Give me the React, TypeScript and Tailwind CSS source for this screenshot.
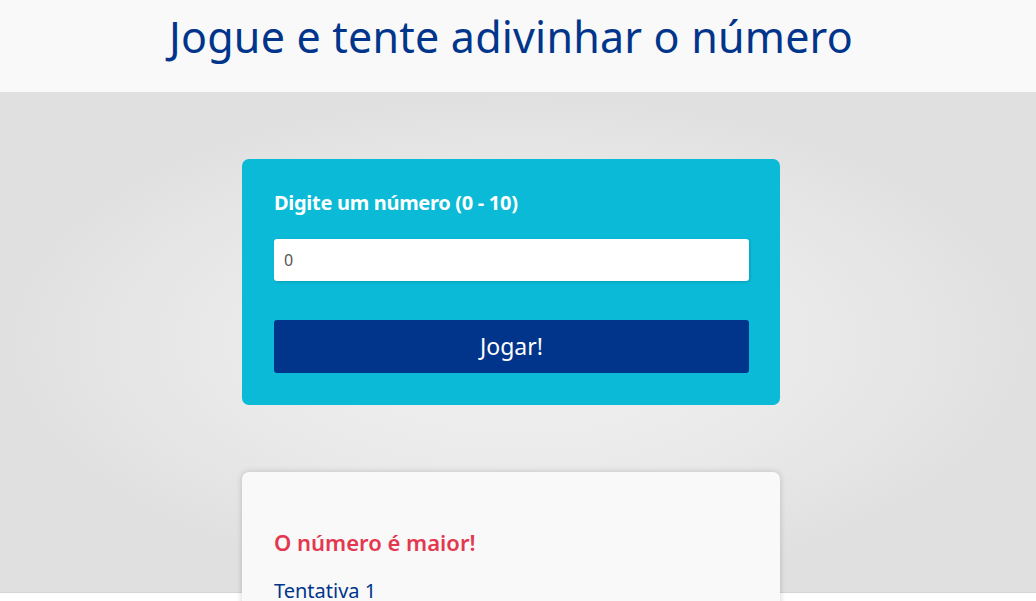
import React from "react";

export default function App() {
  return (
    <div className="h-[601px] overflow-hidden bg-white pr-[14px]" style={{ fontFamily: '"Noto Sans", "Open Sans", sans-serif' }}>
      <header className="h-[92px] bg-[#f9f9f9] flex items-center justify-center -mr-[14px] pr-[14px]">
        <h1 className="text-[43px] leading-none text-[#00358b] tracking-[0.2px] -mt-[20px]">
          Jogue e tente adivinhar o número
        </h1>
      </header>
      <section className="h-[501px] -mr-[14px] pr-[14px] border-b border-[#d4d4d4] bg-[radial-gradient(ellipse_farthest-side_at_50%_50%,#f1f1f1_0%,#e9e9e9_60%,#e0e0e0_100%)] flex flex-col items-center pt-[67px]">
        <div className="w-[538px] bg-[#0bbad6] rounded-[7px] px-[32px] pt-[30px] pb-[32px] flex flex-col">
          <label className="text-white font-bold text-[20px] leading-[28px] tracking-[-0.3px]">
            Digite um número (0 - 10)
          </label>
          <input
            defaultValue="0"
            className="mt-[22px] h-[42px] w-[475px] bg-white rounded-[3px] px-[10px] text-[16px] text-[#555] shadow-[1px_1px_3px_rgba(0,0,0,0.15)] outline-none"
          />
          <button className="mt-[39px] h-[53px] w-[475px] bg-[#00358b] rounded-[3px] text-white text-[23px]">
            Jogar!
          </button>
        </div>
        <div className="mt-[67px] w-[538px] bg-[#f9f9f9] rounded-[7px] shadow-[0_0_6px_rgba(0,0,0,0.18)] px-[32px] pt-[54px] pb-[30px] shrink-0">
          <h2 className="text-[#e3384f] text-[22px] font-semibold leading-[32px]">O número é maior!</h2>
          <p className="mt-[20px] text-[#00358b] text-[20px] leading-[26px]">Tentativa 1</p>
        </div>
      </section>
    </div>
  );
}
